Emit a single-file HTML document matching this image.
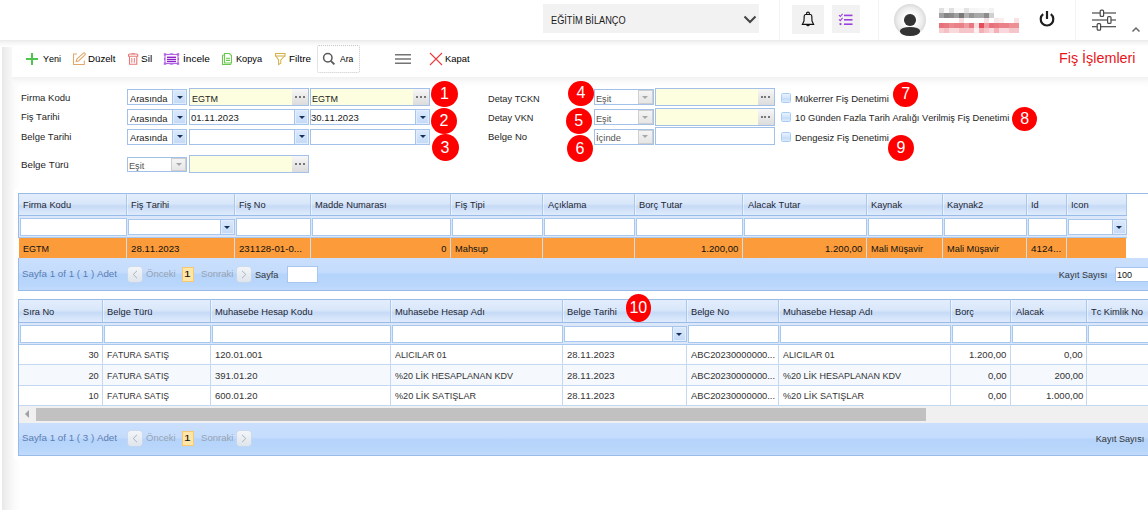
<!DOCTYPE html>
<html><head><meta charset="utf-8"><style>
html,body{margin:0;padding:0;width:1148px;height:510px;overflow:hidden;background:#fff;position:relative;font-family:"Liberation Sans",sans-serif;}
body>div,body>span,body>svg{position:absolute;box-sizing:border-box;}
.t{white-space:nowrap;line-height:20px;font-kerning:none;}
</style></head><body>
<div style="left:2px;top:40px;width:18px;height:470px;background:linear-gradient(90deg,#e8e8e8,#f1f1f1 30%,#f9f9f9 60%,#fff)"></div>
<div style="left:12px;top:47px;width:1136px;height:30px;background:#fff"></div>
<div style="left:14px;top:189px;width:1134px;height:270px;background:#fff"></div>
<div style="left:0px;top:40px;width:1148px;height:7px;background:linear-gradient(#e9e9e9,#f6f6f6 40%,#fff)"></div>
<div style="left:12px;top:77px;width:1136px;height:10px;background:linear-gradient(#f1f1f1,#fafafa 50%,rgba(255,255,255,0))"></div>
<div style="left:543px;top:4.4px;width:216px;height:28.9px;background:#f2f2f2"></div>
<span class="t" style="left:550.85px;top:9.86px;font-size:10.5px;color:#1a1a1a;transform:scale(0.8757,1.0);transform-origin:0 13px;">EĞİTİM BİLANÇO</span>
<svg style="left:743px;top:14px" width="14" height="10" viewBox="0 0 14 10"><polyline points="1.5,2.5 7,8 12.5,2.5" fill="none" stroke="#444" stroke-width="2"/></svg>
<div style="left:779px;top:0px;width:1px;height:40px;background:#f3f3f3"></div>
<div style="left:792px;top:5px;width:32px;height:29px;background:#f2f2f2"></div>
<svg style="left:800px;top:11px" width="16" height="17" viewBox="0 0 16 17"><path d="M6.6 3.4 V2.2 Q6.6 1.1 8 1.1 Q9.4 1.1 9.4 2.2 V3.4" fill="none" stroke="#111" stroke-width="1.1"/><path d="M5.6 3.5 H10.4 Q11.6 3.5 11.8 5 L12 10 L13.6 13.3 H2.4 L4 10 L4.2 5 Q4.4 3.5 5.6 3.5 Z" fill="none" stroke="#111" stroke-width="1.15"/><path d="M6.7 13.5 A1.3 1.3 0 0 0 9.3 13.5" fill="none" stroke="#111" stroke-width="1.1"/></svg>
<div style="left:832px;top:5px;width:28px;height:28px;background:#f2f2f2"></div>
<svg style="left:838px;top:13px" width="16" height="14" viewBox="0 0 16 14"><path d="M1 2.2 L2.3 3.5 L4.6 0.8 M1 6.3 L2.3 7.6 L4.6 4.9" fill="none" stroke="#9b3fe0" stroke-width="1.1"/><circle cx="2.5" cy="11.1" r="1.15" fill="#9b3fe0"/><rect x="6" y="1.6" width="8.5" height="1.6" fill="#9b3fe0"/><rect x="6" y="6" width="8.5" height="1.6" fill="#9b3fe0"/><rect x="6" y="10.4" width="8.5" height="1.6" fill="#9b3fe0"/></svg>
<div style="left:878px;top:0px;width:1px;height:40px;background:#f3f3f3"></div>
<div style="left:894px;top:4px;width:32px;height:32px;border-radius:50%;background:radial-gradient(circle closest-side at 50% 50%,#ffffff 0%,#fbfbfb 45%,#ebebeb 80%,#dadada 100%)"><div style="position:absolute;left:10.2px;top:10px;width:11.6px;height:11.6px;border-radius:50%;background:#333"></div><div style="position:absolute;left:5.8px;top:23.3px;width:20.4px;height:8.4px;border-radius:50% 50% 50% 50% / 45% 45% 55% 55%;background:#333"></div></div>
<div style="left:939px;top:8px;width:5px;height:5px;background:#e0e0e0"></div>
<div style="left:944px;top:8px;width:5px;height:5px;background:#fafafa"></div>
<div style="left:949px;top:8px;width:5px;height:5px;background:#e0e0e0"></div>
<div style="left:954px;top:8px;width:5px;height:5px;background:#fafafa"></div>
<div style="left:959px;top:8px;width:5px;height:5px;background:#fafafa"></div>
<div style="left:964px;top:8px;width:5px;height:5px;background:#e3e3e3"></div>
<div style="left:969px;top:8px;width:5px;height:5px;background:#f5f5f5"></div>
<div style="left:974px;top:8px;width:5px;height:5px;background:#f5f5f5"></div>
<div style="left:979px;top:8px;width:5px;height:5px;background:#f8f8f8"></div>
<div style="left:984px;top:8px;width:5px;height:5px;background:#fafafa"></div>
<div style="left:989px;top:8px;width:5px;height:5px;background:#f2f2f2"></div>
<div style="left:939px;top:13px;width:5px;height:5px;background:#a0a0a0"></div>
<div style="left:944px;top:13px;width:5px;height:5px;background:#858585"></div>
<div style="left:949px;top:13px;width:5px;height:5px;background:#8c8c8c"></div>
<div style="left:954px;top:13px;width:5px;height:5px;background:#a0a0a0"></div>
<div style="left:959px;top:13px;width:5px;height:5px;background:#787878"></div>
<div style="left:964px;top:13px;width:5px;height:5px;background:#b0b0b0"></div>
<div style="left:969px;top:13px;width:5px;height:5px;background:#959595"></div>
<div style="left:974px;top:13px;width:5px;height:5px;background:#a8a8a8"></div>
<div style="left:979px;top:13px;width:5px;height:5px;background:#a8a8a8"></div>
<div style="left:984px;top:13px;width:5px;height:5px;background:#8c8c8c"></div>
<div style="left:989px;top:13px;width:5px;height:5px;background:#d0d0d0"></div>
<div style="left:959px;top:18px;width:5px;height:5px;background:#f8e0e2"></div>
<div style="left:984px;top:18px;width:5px;height:5px;background:#f7e0e2"></div>
<div style="left:994px;top:18px;width:5px;height:5px;background:#f9e8ea"></div>
<div style="left:999px;top:18px;width:5px;height:5px;background:#fbeeee"></div>
<div style="left:1014px;top:18px;width:5px;height:5px;background:#f8e2e4"></div>
<div style="left:939px;top:23px;width:5px;height:5px;background:#e8707a"></div>
<div style="left:944px;top:23px;width:5px;height:5px;background:#e87880"></div>
<div style="left:949px;top:23px;width:5px;height:5px;background:#ec8890"></div>
<div style="left:954px;top:23px;width:5px;height:5px;background:#ec8088"></div>
<div style="left:959px;top:23px;width:5px;height:5px;background:#e88088"></div>
<div style="left:964px;top:23px;width:5px;height:5px;background:#ee9ca2"></div>
<div style="left:969px;top:23px;width:5px;height:5px;background:#e87880"></div>
<div style="left:974px;top:23px;width:5px;height:5px;background:#f8dcdf"></div>
<div style="left:979px;top:23px;width:5px;height:5px;background:#e44a58"></div>
<div style="left:984px;top:23px;width:5px;height:5px;background:#ef9aa0"></div>
<div style="left:989px;top:23px;width:5px;height:5px;background:#e8707c"></div>
<div style="left:994px;top:23px;width:5px;height:5px;background:#e87880"></div>
<div style="left:999px;top:23px;width:5px;height:5px;background:#eb8088"></div>
<div style="left:1004px;top:23px;width:5px;height:5px;background:#eb8088"></div>
<div style="left:1009px;top:23px;width:5px;height:5px;background:#ec9096"></div>
<div style="left:1014px;top:23px;width:5px;height:5px;background:#ec9096"></div>
<div style="left:939px;top:28px;width:5px;height:5px;background:#f7cdd0"></div>
<div style="left:944px;top:28px;width:5px;height:5px;background:#f5c0c5"></div>
<div style="left:949px;top:28px;width:5px;height:5px;background:#f8dadc"></div>
<div style="left:954px;top:28px;width:5px;height:5px;background:#f8dadc"></div>
<div style="left:959px;top:28px;width:5px;height:5px;background:#f5c5ca"></div>
<div style="left:964px;top:28px;width:5px;height:5px;background:#f5c5ca"></div>
<div style="left:969px;top:28px;width:5px;height:5px;background:#f5c5ca"></div>
<div style="left:974px;top:28px;width:5px;height:5px;background:#fdf0f0"></div>
<div style="left:979px;top:28px;width:5px;height:5px;background:#f3b0b5"></div>
<div style="left:984px;top:28px;width:5px;height:5px;background:#f6c5ca"></div>
<div style="left:989px;top:28px;width:5px;height:5px;background:#f8d8dc"></div>
<div style="left:994px;top:28px;width:5px;height:5px;background:#f3b0b5"></div>
<div style="left:999px;top:28px;width:5px;height:5px;background:#f8d8dc"></div>
<div style="left:1004px;top:28px;width:5px;height:5px;background:#f8d8dc"></div>
<div style="left:1009px;top:28px;width:5px;height:5px;background:#f5c5ca"></div>
<div style="left:1014px;top:28px;width:5px;height:5px;background:#f5c5ca"></div>
<svg style="left:1037px;top:9px" width="20" height="20" viewBox="0 0 20 20"><path d="M6.2 5.2 A6.3 6.3 0 1 0 13.8 5.2" fill="none" stroke="#1e1e1e" stroke-width="2.2"/><line x1="10" y1="2" x2="10" y2="10" stroke="#1e1e1e" stroke-width="2.2"/></svg>
<div style="left:1075px;top:0px;width:1px;height:40px;background:#f3f3f3"></div>
<svg style="left:1090px;top:8px" width="28" height="24" viewBox="0 0 28 24"><g stroke="#4a4a4a" stroke-width="1.2" fill="#fff"><line x1="2" y1="5" x2="26" y2="5"/><line x1="2" y1="12" x2="26" y2="12"/><line x1="2" y1="18.7" x2="26" y2="18.7"/><rect x="10.2" y="2.2" width="3.4" height="6.2" rx="1"/><rect x="17.6" y="8.6" width="3.4" height="6.8" rx="1"/><rect x="7.2" y="15.6" width="3.4" height="6.6" rx="1"/></g></svg>
<svg style="left:1131px;top:26px" width="10" height="7" viewBox="0 0 10 7"><polyline points="1.5,5.5 5,2 8.5,5.5" fill="none" stroke="#666" stroke-width="1.5"/></svg>
<div style="left:31.1px;top:53px;width:1.8px;height:12px;background:#4cc64c"></div>
<div style="left:26px;top:58.1px;width:12px;height:1.8px;background:#4cc64c"></div>
<span class="t" style="left:42.80px;top:49.17px;font-size:9.6px;color:#000;transform:scale(0.9425,1.0);transform-origin:0 13px;">Yeni</span>
<svg style="left:72px;top:52px" width="15" height="14" viewBox="0 0 15 14"><path d="M5 2 H1.5 V12.5 H12.3 V8.5" fill="none" stroke="#e3a768" stroke-width="1.05"/><path d="M4.2 9.6 L4.8 7.1 L11.4 1.1 Q12.3 0.5 13 1.3 Q13.6 2.1 13 2.9 L6.6 9.0 Z" fill="none" stroke="#e3a768" stroke-width="1.05"/></svg>
<span class="t" style="left:88.21px;top:49.17px;font-size:9.6px;color:#000;transform:scale(1.0094,1.0);transform-origin:0 13px;">Düzelt</span>
<svg style="left:127px;top:52px" width="13" height="14" viewBox="0 0 13 14"><path d="M1.5 4.3 H10.8 V3.2 Q10.8 2 9.6 2 H2.7 Q1.5 2 1.5 3.2 Z" fill="none" stroke="#e57878" stroke-width="1.1"/><path d="M4.5 2 Q6.1 0.9 7.8 2" fill="none" stroke="#e57878" stroke-width="1"/><path d="M2.5 4.5 V12.2 H9.8 V4.5" fill="none" stroke="#e57878" stroke-width="1.1"/><path d="M4.8 6 V10.8 M7.4 6 V10.8" stroke="#ea8f8f" stroke-width="1.2"/></svg>
<span class="t" style="left:141.15px;top:49.17px;font-size:9.6px;color:#000;transform:scale(1.0427,1.0);transform-origin:0 13px;">Sil</span>
<svg style="left:163px;top:52px" width="17" height="14" viewBox="0 0 17 14"><rect x="2" y="2.5" width="13" height="9" fill="none" stroke="#b565e3" stroke-width="1.1"/><g fill="#b565e3"><rect x="0.8" y="1.2" width="2.4" height="2.4"/><rect x="13.8" y="1.2" width="2.4" height="2.4"/><rect x="0.8" y="10.4" width="2.4" height="2.4"/><rect x="13.8" y="10.4" width="2.4" height="2.4"/><ellipse cx="8.5" cy="2" rx="2.2" ry="0.8"/><ellipse cx="8.5" cy="12" rx="2.2" ry="0.8"/><ellipse cx="1.6" cy="7" rx="0.7" ry="1.6"/><ellipse cx="15.4" cy="7" rx="0.7" ry="1.6"/></g><g fill="#8e22c6"><rect x="4" y="4.6" width="9" height="1.4"/><rect x="4" y="6.8" width="9" height="1.4"/><rect x="4" y="8.9" width="9" height="1.3"/></g></svg>
<span class="t" style="left:182.57px;top:49.17px;font-size:9.6px;color:#000;transform:scale(1.0492,1.0);transform-origin:0 13px;">İncele</span>
<svg style="left:221px;top:52px" width="12" height="14" viewBox="0 0 12 14"><path d="M3.5 1.5 H8.5 L10.5 3.5 V11 H3.5 Z" fill="none" stroke="#68c94e" stroke-width="1.1"/><path d="M3 3 H2.5 Q1.5 3 1.5 4 V12.5 H9 Q10 12.5 10 11.5" fill="none" stroke="#68c94e" stroke-width="1.1"/><path d="M5 6.3 H9 M5 8.4 H9" stroke="#68c94e" stroke-width="1.1"/></svg>
<span class="t" style="left:235.95px;top:49.17px;font-size:9.6px;color:#000;transform:scale(0.9571,1.0);transform-origin:0 13px;">Kopya</span>
<svg style="left:274px;top:52px" width="12" height="14" viewBox="0 0 12 14"><rect x="1.5" y="1.5" width="9.5" height="2.5" fill="none" stroke="#d4b24a" stroke-width="1.05"/><path d="M1.9 4 L4.6 8 V12.6 L6.8 11.2 V8 L10.6 4" fill="none" stroke="#d4b24a" stroke-width="1.05"/></svg>
<span class="t" style="left:288.99px;top:49.17px;font-size:9.6px;color:#000;transform:scale(1.0289,1.0);transform-origin:0 13px;">Filtre</span>
<div style="left:317px;top:45px;width:43px;height:28px;border:1px dotted #c8c8c8;border-radius:2px"></div>
<svg style="left:322px;top:52px" width="14" height="14" viewBox="0 0 14 14"><circle cx="5.8" cy="5.8" r="4.2" fill="none" stroke="#5a5a5a" stroke-width="1.5"/><path d="M8.8 8.8 L12.4 12.4" stroke="#5a5a5a" stroke-width="1.9"/></svg>
<span class="t" style="left:339.78px;top:49.17px;font-size:9.6px;color:#000;transform:scale(0.8847,1.0);transform-origin:0 13px;">Ara</span>
<svg style="left:394px;top:50px" width="18" height="16" viewBox="0 0 18 16"><path d="M1 4.7 H17 M1 9 H17 M1 13.3 H17" stroke="#747474" stroke-width="1.4"/></svg>
<svg style="left:429px;top:52px" width="14" height="14" viewBox="0 0 14 14"><path d="M1 1 L13 13 M13 1 L1 13" stroke="#ee3a3a" stroke-width="1.1"/></svg>
<span class="t" style="left:445.23px;top:49.17px;font-size:9.6px;color:#000;transform:scale(0.9781,1.0);transform-origin:0 13px;">Kapat</span>
<span class="t" style="left:1059.42px;top:48.35px;font-size:14px;color:#e8141c;transform:scale(1.0251,1);transform-origin:0 13px;">Fiş İşlemleri</span>
<span class="t" style="left:21.02px;top:87.97px;font-size:9.6px;color:#1e1e1e;transform:scale(0.9960,1.0);transform-origin:0 13px;">Firma Kodu</span>
<span class="t" style="left:21.03px;top:106.97px;font-size:9.6px;color:#1e1e1e;transform:scale(0.9781,1.0);transform-origin:0 13px;">Fiş Tarihi</span>
<span class="t" style="left:21.03px;top:126.97px;font-size:9.6px;color:#1e1e1e;transform:scale(0.9841,1.0);transform-origin:0 13px;">Belge Tarihi</span>
<span class="t" style="left:21.00px;top:155.17px;font-size:9.6px;color:#1e1e1e;transform:scale(1.0184,1.0);transform-origin:0 13px;">Belge Türü</span>
<div style="left:127px;top:89px;width:60px;height:16px;border:1px solid #a3c0e8;background:#fff"></div>
<div style="left:172px;top:89px;width:15px;height:16px;border:1px solid #a6c4ec;box-shadow:inset 0 0 0 1px #e3eefc;background:linear-gradient(#dce9fb,#d0e2f9 50%,#c3d9f6)"><div style="position:absolute;left:3.5px;top:5.5px;width:0;height:0;border-left:3px solid transparent;border-right:3px solid transparent;border-top:3.5px solid #15305a"></div></div>
<span class="t" style="left:130.18px;top:88.77px;font-size:9.6px;color:#222;transform:scale(0.9731,1.0);transform-origin:0 13px;">Arasında</span>
<div style="left:127px;top:109px;width:60px;height:16px;border:1px solid #a3c0e8;background:#fff"></div>
<div style="left:172px;top:109px;width:15px;height:16px;border:1px solid #a6c4ec;box-shadow:inset 0 0 0 1px #e3eefc;background:linear-gradient(#dce9fb,#d0e2f9 50%,#c3d9f6)"><div style="position:absolute;left:3.5px;top:5.5px;width:0;height:0;border-left:3px solid transparent;border-right:3px solid transparent;border-top:3.5px solid #15305a"></div></div>
<span class="t" style="left:130.18px;top:108.77px;font-size:9.6px;color:#222;transform:scale(0.9731,1.0);transform-origin:0 13px;">Arasında</span>
<div style="left:127px;top:128.5px;width:60px;height:16.5px;border:1px solid #a3c0e8;background:#fff"></div>
<div style="left:172px;top:128.5px;width:15px;height:16.5px;border:1px solid #a6c4ec;box-shadow:inset 0 0 0 1px #e3eefc;background:linear-gradient(#dce9fb,#d0e2f9 50%,#c3d9f6)"><div style="position:absolute;left:3.5px;top:5.8px;width:0;height:0;border-left:3px solid transparent;border-right:3px solid transparent;border-top:3.5px solid #15305a"></div></div>
<span class="t" style="left:130.18px;top:128.27px;font-size:9.6px;color:#222;transform:scale(0.9731,1.0);transform-origin:0 13px;">Arasında</span>
<div style="left:127px;top:156.5px;width:60px;height:15.5px;border:1px solid #a3c0e8;background:#fff"></div>
<div style="left:171px;top:157.5px;width:15px;height:13.5px;border:1px solid #cfcfcf;background:linear-gradient(#f4f4f4,#e6e6e6)"><div style="position:absolute;left:3.5px;top:4.2px;width:0;height:0;border-left:3px solid transparent;border-right:3px solid transparent;border-top:3.5px solid #a8a8a8"></div></div>
<span class="t" style="left:129.45px;top:156.27px;font-size:9.6px;color:#555;transform:scale(0.9529,1.0);transform-origin:0 13px;">Eşit</span>
<div style="left:189px;top:88px;width:120px;height:18px;border:1px solid #a3c0e8;background:#fdfde0"></div>
<div style="left:292px;top:89px;width:16px;height:16px;background:linear-gradient(#f7f7f7,#dcdcdc)"></div>
<div style="left:295px;top:96px;width:2px;height:2px;background:#777"></div>
<div style="left:299px;top:96px;width:2px;height:2px;background:#777"></div>
<div style="left:303px;top:96px;width:2px;height:2px;background:#777"></div>
<div style="left:310px;top:88px;width:120px;height:18px;border:1px solid #a3c0e8;background:#fdfde0"></div>
<div style="left:413px;top:89px;width:16px;height:16px;background:linear-gradient(#f7f7f7,#dcdcdc)"></div>
<div style="left:416px;top:96px;width:2px;height:2px;background:#777"></div>
<div style="left:420px;top:96px;width:2px;height:2px;background:#777"></div>
<div style="left:424px;top:96px;width:2px;height:2px;background:#777"></div>
<span class="t" style="left:191.76px;top:88.77px;font-size:9.6px;color:#1a1a1a;transform:scale(0.9367,1.0);transform-origin:0 13px;">EGTM</span>
<span class="t" style="left:311.76px;top:88.77px;font-size:9.6px;color:#1a1a1a;transform:scale(0.9367,1.0);transform-origin:0 13px;">EGTM</span>
<div style="left:189px;top:109px;width:120px;height:16px;border:1px solid #a3c0e8;background:#fff"></div>
<div style="left:294px;top:109px;width:15px;height:16px;border:1px solid #a6c4ec;box-shadow:inset 0 0 0 1px #e3eefc;background:linear-gradient(#dce9fb,#d0e2f9 50%,#c3d9f6)"><div style="position:absolute;left:3.5px;top:5.5px;width:0;height:0;border-left:3px solid transparent;border-right:3px solid transparent;border-top:3.5px solid #15305a"></div></div>
<div style="left:310px;top:109px;width:120px;height:16px;border:1px solid #a3c0e8;background:#fff"></div>
<div style="left:415px;top:109px;width:15px;height:16px;border:1px solid #a6c4ec;box-shadow:inset 0 0 0 1px #e3eefc;background:linear-gradient(#dce9fb,#d0e2f9 50%,#c3d9f6)"><div style="position:absolute;left:3.5px;top:5.5px;width:0;height:0;border-left:3px solid transparent;border-right:3px solid transparent;border-top:3.5px solid #15305a"></div></div>
<span class="t" style="left:191.43px;top:107.87px;font-size:9.6px;color:#1a1a1a;transform:scale(0.9947,1.0);transform-origin:0 13px;">01.11.2023</span>
<span class="t" style="left:311.44px;top:107.87px;font-size:9.6px;color:#1a1a1a;transform:scale(0.9945,1.0);transform-origin:0 13px;">30.11.2023</span>
<div style="left:189px;top:128.5px;width:120px;height:16.5px;border:1px solid #a3c0e8;background:#fff"></div>
<div style="left:294px;top:128.5px;width:15px;height:16.5px;border:1px solid #a6c4ec;box-shadow:inset 0 0 0 1px #e3eefc;background:linear-gradient(#dce9fb,#d0e2f9 50%,#c3d9f6)"><div style="position:absolute;left:3.5px;top:5.8px;width:0;height:0;border-left:3px solid transparent;border-right:3px solid transparent;border-top:3.5px solid #15305a"></div></div>
<div style="left:310px;top:128.5px;width:120px;height:16.5px;border:1px solid #a3c0e8;background:#fff"></div>
<div style="left:415px;top:128.5px;width:15px;height:16.5px;border:1px solid #a6c4ec;box-shadow:inset 0 0 0 1px #e3eefc;background:linear-gradient(#dce9fb,#d0e2f9 50%,#c3d9f6)"><div style="position:absolute;left:3.5px;top:5.8px;width:0;height:0;border-left:3px solid transparent;border-right:3px solid transparent;border-top:3.5px solid #15305a"></div></div>
<div style="left:189px;top:155px;width:120px;height:18px;border:1px solid #a3c0e8;background:#fdfde0"></div>
<div style="left:292px;top:156px;width:16px;height:16px;background:linear-gradient(#f7f7f7,#dcdcdc)"></div>
<div style="left:295px;top:163px;width:2px;height:2px;background:#777"></div>
<div style="left:299px;top:163px;width:2px;height:2px;background:#777"></div>
<div style="left:303px;top:163px;width:2px;height:2px;background:#777"></div>
<span class="t" style="left:487.64px;top:88.57px;font-size:9.6px;color:#1e1e1e;transform:scale(0.9616,1.0);transform-origin:0 13px;">Detay TCKN</span>
<span class="t" style="left:487.65px;top:107.77px;font-size:9.6px;color:#1e1e1e;transform:scale(0.9583,1.0);transform-origin:0 13px;">Detay VKN</span>
<span class="t" style="left:487.62px;top:127.17px;font-size:9.6px;color:#1e1e1e;transform:scale(0.9921,1.0);transform-origin:0 13px;">Belge No</span>
<div style="left:594px;top:89px;width:59.5px;height:16px;border:1px solid #a3c0e8;background:#fff"></div>
<div style="left:637.5px;top:90px;width:15px;height:14px;border:1px solid #cfcfcf;background:linear-gradient(#f4f4f4,#e6e6e6)"><div style="position:absolute;left:3.5px;top:4.5px;width:0;height:0;border-left:3px solid transparent;border-right:3px solid transparent;border-top:3.5px solid #a8a8a8"></div></div>
<span class="t" style="left:596.45px;top:88.77px;font-size:9.6px;color:#555;transform:scale(0.9529,1.0);transform-origin:0 13px;">Eşit</span>
<div style="left:594px;top:109px;width:59.5px;height:16px;border:1px solid #a3c0e8;background:#fff"></div>
<div style="left:637.5px;top:110px;width:15px;height:14px;border:1px solid #cfcfcf;background:linear-gradient(#f4f4f4,#e6e6e6)"><div style="position:absolute;left:3.5px;top:4.5px;width:0;height:0;border-left:3px solid transparent;border-right:3px solid transparent;border-top:3.5px solid #a8a8a8"></div></div>
<span class="t" style="left:596.45px;top:108.77px;font-size:9.6px;color:#555;transform:scale(0.9529,1.0);transform-origin:0 13px;">Eşit</span>
<div style="left:594px;top:128.5px;width:59.5px;height:16px;border:1px solid #a3c0e8;background:#fff"></div>
<div style="left:637.5px;top:129.5px;width:15px;height:14px;border:1px solid #cfcfcf;background:linear-gradient(#f4f4f4,#e6e6e6)"><div style="position:absolute;left:3.5px;top:4.5px;width:0;height:0;border-left:3px solid transparent;border-right:3px solid transparent;border-top:3.5px solid #a8a8a8"></div></div>
<span class="t" style="left:596.33px;top:128.27px;font-size:9.6px;color:#555;transform:scale(0.9785,1.0);transform-origin:0 13px;">İçinde</span>
<div style="left:655px;top:88px;width:119.5px;height:18px;border:1px solid #a3c0e8;background:#fdfde0"></div>
<div style="left:757.5px;top:89px;width:16px;height:16px;background:linear-gradient(#f7f7f7,#dcdcdc)"></div>
<div style="left:761px;top:96px;width:2px;height:2px;background:#777"></div>
<div style="left:764px;top:96px;width:2px;height:2px;background:#777"></div>
<div style="left:768px;top:96px;width:2px;height:2px;background:#777"></div>
<div style="left:655px;top:108px;width:119.5px;height:18px;border:1px solid #a3c0e8;background:#fdfde0"></div>
<div style="left:757.5px;top:109px;width:16px;height:16px;background:linear-gradient(#f7f7f7,#dcdcdc)"></div>
<div style="left:761px;top:116px;width:2px;height:2px;background:#777"></div>
<div style="left:764px;top:116px;width:2px;height:2px;background:#777"></div>
<div style="left:768px;top:116px;width:2px;height:2px;background:#777"></div>
<div style="left:655px;top:127px;width:119.5px;height:18px;border:1px solid #a3c0e8;background:#fff"></div>
<div style="left:781px;top:92.8px;width:10px;height:10px;border:1px solid #abcdf3;border-radius:1.5px;background:linear-gradient(#e6f1fd,#d4e6fb 45%,#c4dcf8 60%,#dcebfc)"></div>
<div style="left:781px;top:112.3px;width:10px;height:10px;border:1px solid #abcdf3;border-radius:1.5px;background:linear-gradient(#e6f1fd,#d4e6fb 45%,#c4dcf8 60%,#dcebfc)"></div>
<div style="left:781px;top:132px;width:10px;height:10px;border:1px solid #abcdf3;border-radius:1.5px;background:linear-gradient(#e6f1fd,#d4e6fb 45%,#c4dcf8 60%,#dcebfc)"></div>
<span class="t" style="left:794.72px;top:89.17px;font-size:9.6px;color:#1e1e1e;transform:scale(0.9948,1.0);transform-origin:0 13px;">Mükerrer Fiş Denetimi</span>
<span class="t" style="left:794.79px;top:108.17px;font-size:9.6px;color:#1e1e1e;transform:scale(0.9680,1.0);transform-origin:0 13px;">10 Günden Fazla Tarih Aralığı Verilmiş Fiş Denetimi</span>
<span class="t" style="left:794.73px;top:127.97px;font-size:9.6px;color:#1e1e1e;transform:scale(0.9778,1.0);transform-origin:0 13px;">Dengesiz Fiş Denetimi</span>
<div style="left:430.85px;top:80.75px;width:27.5px;height:26.5px;border-radius:50%;background:#ff0000"></div>
<span class="t" style="left:439.93px;top:83.96px;font-size:16px;color:#fff;">1</span>
<div style="left:431.00px;top:108.00px;width:26px;height:26px;border-radius:50%;background:#ff0000"></div>
<span class="t" style="left:439.55px;top:110.96px;font-size:16px;color:#fff;">2</span>
<div style="left:431.50px;top:134.20px;width:27px;height:27px;border-radius:50%;background:#ff0000"></div>
<span class="t" style="left:440.60px;top:137.66px;font-size:16px;color:#fff;">3</span>
<div style="left:568.05px;top:80.65px;width:25.5px;height:25.5px;border-radius:50%;background:#ff0000"></div>
<span class="t" style="left:576.40px;top:83.36px;font-size:16px;color:#fff;">4</span>
<div style="left:565.80px;top:108.00px;width:26px;height:26px;border-radius:50%;background:#ff0000"></div>
<span class="t" style="left:574.37px;top:110.96px;font-size:16px;color:#fff;">5</span>
<div style="left:567.00px;top:135.30px;width:26px;height:27px;border-radius:50%;background:#ff0000"></div>
<span class="t" style="left:575.50px;top:138.76px;font-size:16px;color:#fff;">6</span>
<div style="left:892.85px;top:82.00px;width:25.5px;height:25px;border-radius:50%;background:#ff0000"></div>
<span class="t" style="left:901.14px;top:84.46px;font-size:16px;color:#fff;">7</span>
<div style="left:1011.90px;top:106.75px;width:25.6px;height:24.5px;border-radius:50%;background:#ff0000"></div>
<span class="t" style="left:1020.25px;top:108.96px;font-size:16px;color:#fff;">8</span>
<div style="left:888.00px;top:135.00px;width:26px;height:26px;border-radius:50%;background:#ff0000"></div>
<span class="t" style="left:896.55px;top:137.96px;font-size:16px;color:#fff;">9</span>
<div style="left:19px;top:194px;width:1108px;height:21px;background:linear-gradient(#e3eefc 0%,#d9e7fa 45%,#c6daf6 58%,#d4e4fa 80%,#dfebfc 100%)"></div>
<div style="left:18px;top:193px;width:1130px;height:1px;background:#99bbe8"></div>
<div style="left:18px;top:215px;width:1109px;height:1px;background:#99bbe8"></div>
<div style="left:126px;top:193px;width:1px;height:22px;background:#a9c8ee"></div>
<div style="left:127px;top:194px;width:1px;height:21px;background:rgba(255,255,255,0.45)"></div>
<div style="left:234px;top:193px;width:1px;height:22px;background:#a9c8ee"></div>
<div style="left:235px;top:194px;width:1px;height:21px;background:rgba(255,255,255,0.45)"></div>
<div style="left:310px;top:193px;width:1px;height:22px;background:#a9c8ee"></div>
<div style="left:311px;top:194px;width:1px;height:21px;background:rgba(255,255,255,0.45)"></div>
<div style="left:450px;top:193px;width:1px;height:22px;background:#a9c8ee"></div>
<div style="left:451px;top:194px;width:1px;height:21px;background:rgba(255,255,255,0.45)"></div>
<div style="left:542px;top:193px;width:1px;height:22px;background:#a9c8ee"></div>
<div style="left:543px;top:194px;width:1px;height:21px;background:rgba(255,255,255,0.45)"></div>
<div style="left:634px;top:193px;width:1px;height:22px;background:#a9c8ee"></div>
<div style="left:635px;top:194px;width:1px;height:21px;background:rgba(255,255,255,0.45)"></div>
<div style="left:742px;top:193px;width:1px;height:22px;background:#a9c8ee"></div>
<div style="left:743px;top:194px;width:1px;height:21px;background:rgba(255,255,255,0.45)"></div>
<div style="left:866px;top:193px;width:1px;height:22px;background:#a9c8ee"></div>
<div style="left:867px;top:194px;width:1px;height:21px;background:rgba(255,255,255,0.45)"></div>
<div style="left:942px;top:193px;width:1px;height:22px;background:#a9c8ee"></div>
<div style="left:943px;top:194px;width:1px;height:21px;background:rgba(255,255,255,0.45)"></div>
<div style="left:1026px;top:193px;width:1px;height:22px;background:#a9c8ee"></div>
<div style="left:1027px;top:194px;width:1px;height:21px;background:rgba(255,255,255,0.45)"></div>
<div style="left:1066px;top:193px;width:1px;height:22px;background:#a9c8ee"></div>
<div style="left:1067px;top:194px;width:1px;height:21px;background:rgba(255,255,255,0.45)"></div>
<div style="left:1126px;top:193px;width:1px;height:22px;background:#a9c8ee"></div>
<div style="left:1127px;top:194px;width:1px;height:21px;background:rgba(255,255,255,0.45)"></div>
<div style="left:18px;top:193px;width:1px;height:23px;background:#99bbe8"></div>
<span class="t" style="left:22.94px;top:195.17px;font-size:9.6px;color:#1e2632;transform:scale(0.9711,1.0);transform-origin:0 13px;">Firma Kodu</span>
<span class="t" style="left:130.94px;top:195.17px;font-size:9.6px;color:#1e2632;transform:scale(0.9680,1.0);transform-origin:0 13px;">Fiş Tarihi</span>
<span class="t" style="left:238.95px;top:195.17px;font-size:9.6px;color:#1e2632;transform:scale(0.9564,1.0);transform-origin:0 13px;">Fiş No</span>
<span class="t" style="left:314.93px;top:195.17px;font-size:9.6px;color:#1e2632;transform:scale(0.9733,1.0);transform-origin:0 13px;">Madde Numarası</span>
<span class="t" style="left:454.94px;top:195.17px;font-size:9.6px;color:#1e2632;transform:scale(0.9626,1.0);transform-origin:0 13px;">Fiş Tipi</span>
<span class="t" style="left:547.68px;top:195.17px;font-size:9.6px;color:#1e2632;transform:scale(0.9735,1.0);transform-origin:0 13px;">Açıklama</span>
<span class="t" style="left:638.94px;top:195.17px;font-size:9.6px;color:#1e2632;transform:scale(0.9693,1.0);transform-origin:0 13px;">Borç Tutar</span>
<span class="t" style="left:747.68px;top:195.17px;font-size:9.6px;color:#1e2632;transform:scale(0.9724,1.0);transform-origin:0 13px;">Alacak Tutar</span>
<span class="t" style="left:870.94px;top:195.17px;font-size:9.6px;color:#1e2632;transform:scale(0.9702,1.0);transform-origin:0 13px;">Kaynak</span>
<span class="t" style="left:946.94px;top:195.17px;font-size:9.6px;color:#1e2632;transform:scale(0.9694,1.0);transform-origin:0 13px;">Kaynak2</span>
<span class="t" style="left:1030.85px;top:195.17px;font-size:9.6px;color:#1e2632;transform:scale(0.9587,1.0);transform-origin:0 13px;">Id</span>
<span class="t" style="left:1070.84px;top:195.17px;font-size:9.6px;color:#1e2632;transform:scale(0.9748,1.0);transform-origin:0 13px;">Icon</span>
<div style="left:19px;top:216px;width:1108px;height:21px;background:#dce8f9"></div>
<div style="left:18px;top:237px;width:1109px;height:1px;background:#a9c8ee"></div>
<div style="left:20px;top:218px;width:107px;height:18px;border:1px solid #a9c8ee;background:#fff"></div>
<div style="left:128px;top:219px;width:107px;height:16px;border:1px solid #a9c8ee;background:#fff"></div>
<div style="left:220px;top:219px;width:14.5px;height:16px;border:1px solid #a6c4ec;box-shadow:inset 0 0 0 1px #e3eefc;background:linear-gradient(#dce9fb,#d0e2f9 50%,#c3d9f6)"><div style="position:absolute;left:3.2px;top:5.5px;width:0;height:0;border-left:3px solid transparent;border-right:3px solid transparent;border-top:3.5px solid #15305a"></div></div>
<div style="left:236px;top:218px;width:75px;height:18px;border:1px solid #a9c8ee;background:#fff"></div>
<div style="left:312px;top:218px;width:139px;height:18px;border:1px solid #a9c8ee;background:#fff"></div>
<div style="left:452px;top:218px;width:91px;height:18px;border:1px solid #a9c8ee;background:#fff"></div>
<div style="left:544px;top:218px;width:91px;height:18px;border:1px solid #a9c8ee;background:#fff"></div>
<div style="left:636px;top:218px;width:107px;height:18px;border:1px solid #a9c8ee;background:#fff"></div>
<div style="left:744px;top:218px;width:123px;height:18px;border:1px solid #a9c8ee;background:#fff"></div>
<div style="left:868px;top:218px;width:75px;height:18px;border:1px solid #a9c8ee;background:#fff"></div>
<div style="left:944px;top:218px;width:83px;height:18px;border:1px solid #a9c8ee;background:#fff"></div>
<div style="left:1028px;top:218px;width:39px;height:18px;border:1px solid #a9c8ee;background:#fff"></div>
<div style="left:1068px;top:219px;width:59px;height:16px;border:1px solid #a9c8ee;background:#fff"></div>
<div style="left:1112px;top:219px;width:14.5px;height:16px;border:1px solid #a6c4ec;box-shadow:inset 0 0 0 1px #e3eefc;background:linear-gradient(#dce9fb,#d0e2f9 50%,#c3d9f6)"><div style="position:absolute;left:3.2px;top:5.5px;width:0;height:0;border-left:3px solid transparent;border-right:3px solid transparent;border-top:3.5px solid #15305a"></div></div>
<div style="left:18px;top:216px;width:1px;height:22px;background:#99bbe8"></div>
<div style="left:19px;top:238px;width:1107px;height:20px;background:#fb9b3a"></div>
<div style="left:126px;top:238px;width:1px;height:20px;background:#d4dde8"></div>
<div style="left:234px;top:238px;width:1px;height:20px;background:#d4dde8"></div>
<div style="left:310px;top:238px;width:1px;height:20px;background:#d4dde8"></div>
<div style="left:450px;top:238px;width:1px;height:20px;background:#d4dde8"></div>
<div style="left:542px;top:238px;width:1px;height:20px;background:#d4dde8"></div>
<div style="left:634px;top:238px;width:1px;height:20px;background:#d4dde8"></div>
<div style="left:742px;top:238px;width:1px;height:20px;background:#d4dde8"></div>
<div style="left:866px;top:238px;width:1px;height:20px;background:#d4dde8"></div>
<div style="left:942px;top:238px;width:1px;height:20px;background:#d4dde8"></div>
<div style="left:1026px;top:238px;width:1px;height:20px;background:#d4dde8"></div>
<div style="left:1066px;top:238px;width:1px;height:20px;background:#d4dde8"></div>
<span class="t" style="left:22.96px;top:238.87px;font-size:9.6px;color:#111;transform:scale(0.9367,1.0);transform-origin:0 13px;">EGTM</span>
<span class="t" style="left:131.31px;top:238.87px;font-size:9.6px;color:#111;transform:scale(1.0097,1.0);transform-origin:0 13px;">28.11.2023</span>
<span class="t" style="left:239.41px;top:238.87px;font-size:9.6px;color:#111;transform:scale(1.0068,1.0);transform-origin:0 13px;">231128-01-0...</span>
<span class="t" style="right:701.34px;top:238.87px;font-size:9.6px;color:#111;transform:scale(0.9646,1.0);transform-origin:100% 13px;">0</span>
<span class="t" style="left:454.74px;top:238.87px;font-size:9.6px;color:#111;transform:scale(0.9673,1.0);transform-origin:0 13px;">Mahsup</span>
<span class="t" style="right:409.63px;top:238.87px;font-size:9.6px;color:#111;transform:scale(0.9991,1.0);transform-origin:100% 13px;">1.200,00</span>
<span class="t" style="right:285.33px;top:238.87px;font-size:9.6px;color:#111;transform:scale(0.9991,1.0);transform-origin:100% 13px;">1.200,00</span>
<span class="t" style="left:870.74px;top:238.87px;font-size:9.6px;color:#111;transform:scale(0.9664,1.0);transform-origin:0 13px;">Mali Müşavir</span>
<span class="t" style="left:946.74px;top:238.87px;font-size:9.6px;color:#111;transform:scale(0.9664,1.0);transform-origin:0 13px;">Mali Müşavir</span>
<span class="t" style="left:1031.27px;top:238.87px;font-size:9.6px;color:#111;transform:scale(1.0305,1.0);transform-origin:0 13px;">4124...</span>
<div style="left:18px;top:258px;width:1130px;height:32px;background:linear-gradient(#cadffd 0%,#c5dcfc 44%,#b5d4fb 52%,#b9d6fb 85%,#c1dbfc 100%)"></div>
<div style="left:18px;top:290px;width:1130px;height:1px;background:#99bbe8"></div>
<div style="left:18px;top:258px;width:1px;height:33px;background:#99bbe8"></div>
<span class="t" style="left:22.16px;top:263.87px;font-size:9.6px;color:#5b7db2;transform:scale(1.0175,1.0);transform-origin:0 13px;">Sayfa 1 of 1 ( 1 ) Adet</span>
<div style="left:128.4px;top:267.3px;width:14px;height:14.5px;border-radius:3px;background:linear-gradient(#f3f5f8,#dfe5ec);box-shadow:0 0 0 0.5px #d0d8e2"></div>
<svg style="left:131px;top:270.3px" width="8" height="9" viewBox="0 0 8 9"><polyline points="6,0.8 2.2,4.5 6,8.2" fill="none" stroke="#a8b2be" stroke-width="1"/></svg>
<span class="t" style="left:145.55px;top:263.87px;font-size:9.6px;color:#97a3b2;transform:scale(0.9939,1.0);transform-origin:0 13px;">Önceki</span>
<div style="left:182.2px;top:267.0px;width:11.8px;height:15px;background:#ffe6a6;border:1px solid #f7c772;box-sizing:border-box"></div>
<span class="t" style="left:184.38px;top:264.17px;font-size:9.6px;color:#111;transform:scale(1.2563,1.0);transform-origin:0 13px;">1</span>
<span class="t" style="left:200.56px;top:263.87px;font-size:9.6px;color:#97a3b2;transform:scale(0.9979,1.0);transform-origin:0 13px;">Sonraki</span>
<div style="left:236.5px;top:267.3px;width:14px;height:14.5px;border-radius:3px;background:linear-gradient(#f3f5f8,#dfe5ec);box-shadow:0 0 0 0.5px #d0d8e2"></div>
<svg style="left:240px;top:270.3px" width="8" height="9" viewBox="0 0 8 9"><polyline points="2,0.8 5.8,4.5 2,8.2" fill="none" stroke="#a8b2be" stroke-width="1"/></svg>
<span class="t" style="left:255.18px;top:264.67px;font-size:9.6px;color:#333;transform:scale(0.9539,1.0);transform-origin:0 13px;">Sayfa</span>
<div style="left:287.3px;top:265.5px;width:30.3px;height:17px;border:1px solid #a9c6ee;background:#fff"></div>
<span class="t" style="right:40.34px;top:264.87px;font-size:9.6px;color:#333;transform:scale(0.9451,1.0);transform-origin:100% 13px;">Kayıt Sayısı</span>
<div style="left:1115.4px;top:266.5px;width:40px;height:15.5px;border:1px solid #a9c6ee;background:#fff"></div>
<span class="t" style="left:1117.31px;top:265.47px;font-size:9.6px;color:#111;transform:scale(0.9389,1.0);transform-origin:0 13px;">100</span>
<div style="left:19px;top:300px;width:1130px;height:22px;background:linear-gradient(#e3eefc 0%,#d9e7fa 45%,#c6daf6 58%,#d4e4fa 80%,#dfebfc 100%)"></div>
<div style="left:18px;top:299px;width:1130px;height:1px;background:#99bbe8"></div>
<div style="left:18px;top:322px;width:1131px;height:1px;background:#99bbe8"></div>
<div style="left:102px;top:299px;width:1px;height:23px;background:#a9c8ee"></div>
<div style="left:103px;top:300px;width:1px;height:22px;background:rgba(255,255,255,0.45)"></div>
<div style="left:210px;top:299px;width:1px;height:23px;background:#a9c8ee"></div>
<div style="left:211px;top:300px;width:1px;height:22px;background:rgba(255,255,255,0.45)"></div>
<div style="left:390px;top:299px;width:1px;height:23px;background:#a9c8ee"></div>
<div style="left:391px;top:300px;width:1px;height:22px;background:rgba(255,255,255,0.45)"></div>
<div style="left:562px;top:299px;width:1px;height:23px;background:#a9c8ee"></div>
<div style="left:563px;top:300px;width:1px;height:22px;background:rgba(255,255,255,0.45)"></div>
<div style="left:686px;top:299px;width:1px;height:23px;background:#a9c8ee"></div>
<div style="left:687px;top:300px;width:1px;height:22px;background:rgba(255,255,255,0.45)"></div>
<div style="left:778px;top:299px;width:1px;height:23px;background:#a9c8ee"></div>
<div style="left:779px;top:300px;width:1px;height:22px;background:rgba(255,255,255,0.45)"></div>
<div style="left:950px;top:299px;width:1px;height:23px;background:#a9c8ee"></div>
<div style="left:951px;top:300px;width:1px;height:22px;background:rgba(255,255,255,0.45)"></div>
<div style="left:1010px;top:299px;width:1px;height:23px;background:#a9c8ee"></div>
<div style="left:1011px;top:300px;width:1px;height:22px;background:rgba(255,255,255,0.45)"></div>
<div style="left:1086px;top:299px;width:1px;height:23px;background:#a9c8ee"></div>
<div style="left:1087px;top:300px;width:1px;height:22px;background:rgba(255,255,255,0.45)"></div>
<div style="left:1148px;top:299px;width:1px;height:23px;background:#a9c8ee"></div>
<div style="left:1149px;top:300px;width:1px;height:22px;background:rgba(255,255,255,0.45)"></div>
<div style="left:18px;top:299px;width:1px;height:24px;background:#99bbe8"></div>
<span class="t" style="left:23.28px;top:301.87px;font-size:9.6px;color:#1e2632;transform:scale(0.9596,1.0);transform-origin:0 13px;">Sıra No</span>
<span class="t" style="left:106.94px;top:301.87px;font-size:9.6px;color:#1e2632;transform:scale(0.9701,1.0);transform-origin:0 13px;">Belge Türü</span>
<span class="t" style="left:214.93px;top:301.87px;font-size:9.6px;color:#1e2632;transform:scale(0.9740,1.0);transform-origin:0 13px;">Muhasebe Hesap Kodu</span>
<span class="t" style="left:394.93px;top:301.87px;font-size:9.6px;color:#1e2632;transform:scale(0.9728,1.0);transform-origin:0 13px;">Muhasebe Hesap Adı</span>
<span class="t" style="left:566.93px;top:301.87px;font-size:9.6px;color:#1e2632;transform:scale(0.9716,1.0);transform-origin:0 13px;">Belge Tarihi</span>
<span class="t" style="left:690.94px;top:301.87px;font-size:9.6px;color:#1e2632;transform:scale(0.9645,1.0);transform-origin:0 13px;">Belge No</span>
<span class="t" style="left:782.93px;top:301.87px;font-size:9.6px;color:#1e2632;transform:scale(0.9728,1.0);transform-origin:0 13px;">Muhasebe Hesap Adı</span>
<span class="t" style="left:954.94px;top:301.87px;font-size:9.6px;color:#1e2632;transform:scale(0.9595,1.0);transform-origin:0 13px;">Borç</span>
<span class="t" style="left:1015.68px;top:301.87px;font-size:9.6px;color:#1e2632;transform:scale(0.9683,1.0);transform-origin:0 13px;">Alacak</span>
<span class="t" style="left:1091.49px;top:301.87px;font-size:9.6px;color:#1e2632;transform:scale(0.9658,1.0);transform-origin:0 13px;">Tc Kimlik No</span>
<div style="left:19px;top:323px;width:1142px;height:21px;background:#dce8f9"></div>
<div style="left:18px;top:344px;width:1143px;height:1px;background:#a9c8ee"></div>
<div style="left:20px;top:325px;width:83px;height:18px;border:1px solid #a9c8ee;background:#fff"></div>
<div style="left:104px;top:325px;width:107px;height:18px;border:1px solid #a9c8ee;background:#fff"></div>
<div style="left:212px;top:325px;width:179px;height:18px;border:1px solid #a9c8ee;background:#fff"></div>
<div style="left:392px;top:325px;width:171px;height:18px;border:1px solid #a9c8ee;background:#fff"></div>
<div style="left:564px;top:326px;width:123px;height:16px;border:1px solid #a9c8ee;background:#fff"></div>
<div style="left:672px;top:326px;width:14.5px;height:16px;border:1px solid #a6c4ec;box-shadow:inset 0 0 0 1px #e3eefc;background:linear-gradient(#dce9fb,#d0e2f9 50%,#c3d9f6)"><div style="position:absolute;left:3.2px;top:5.5px;width:0;height:0;border-left:3px solid transparent;border-right:3px solid transparent;border-top:3.5px solid #15305a"></div></div>
<div style="left:688px;top:325px;width:91px;height:18px;border:1px solid #a9c8ee;background:#fff"></div>
<div style="left:780px;top:325px;width:171px;height:18px;border:1px solid #a9c8ee;background:#fff"></div>
<div style="left:952px;top:325px;width:59px;height:18px;border:1px solid #a9c8ee;background:#fff"></div>
<div style="left:1012px;top:325px;width:75px;height:18px;border:1px solid #a9c8ee;background:#fff"></div>
<div style="left:1088px;top:325px;width:73px;height:18px;border:1px solid #a9c8ee;background:#fff"></div>
<div style="left:18px;top:323px;width:1px;height:22px;background:#99bbe8"></div>
<div style="left:19px;top:345px;width:1129px;height:19px;background:#fff"></div>
<div style="left:18px;top:364px;width:1130px;height:1px;background:#c4d8f2"></div>
<div style="left:19px;top:365px;width:1129px;height:20px;background:#f5f8fd"></div>
<div style="left:18px;top:385px;width:1130px;height:1px;background:#c4d8f2"></div>
<div style="left:19px;top:386px;width:1129px;height:19px;background:#fff"></div>
<div style="left:18px;top:405px;width:1130px;height:1px;background:#c4d8f2"></div>
<div style="left:102px;top:345px;width:1px;height:60px;background:#c4d8f2"></div>
<div style="left:210px;top:345px;width:1px;height:60px;background:#c4d8f2"></div>
<div style="left:390px;top:345px;width:1px;height:60px;background:#c4d8f2"></div>
<div style="left:562px;top:345px;width:1px;height:60px;background:#c4d8f2"></div>
<div style="left:686px;top:345px;width:1px;height:60px;background:#c4d8f2"></div>
<div style="left:778px;top:345px;width:1px;height:60px;background:#c4d8f2"></div>
<div style="left:950px;top:345px;width:1px;height:60px;background:#c4d8f2"></div>
<div style="left:1010px;top:345px;width:1px;height:60px;background:#c4d8f2"></div>
<div style="left:1086px;top:345px;width:1px;height:60px;background:#c4d8f2"></div>
<div style="left:18px;top:344px;width:1px;height:62px;background:#99bbe8"></div>
<span class="t" style="right:1049.74px;top:344.97px;font-size:9.6px;color:#333;transform:scale(0.9646,1.0);transform-origin:100% 13px;">30</span>
<span class="t" style="left:106.79px;top:344.97px;font-size:9.6px;color:#333;transform:scale(0.9026,1.0);transform-origin:0 13px;">FATURA SATIŞ</span>
<span class="t" style="left:214.78px;top:344.97px;font-size:9.6px;color:#333;transform:scale(0.9914,1.0);transform-origin:0 13px;">120.01.001</span>
<span class="t" style="left:395.48px;top:344.97px;font-size:9.6px;color:#333;transform:scale(0.9216,1.0);transform-origin:0 13px;">ALICILAR 01</span>
<span class="t" style="left:567.02px;top:344.97px;font-size:9.6px;color:#333;transform:scale(0.9914,1.0);transform-origin:0 13px;">28.11.2023</span>
<span class="t" style="left:691.48px;top:344.97px;font-size:9.6px;color:#333;transform:scale(0.9724,1.0);transform-origin:0 13px;">ABC20230000000...</span>
<span class="t" style="left:783.48px;top:344.97px;font-size:9.6px;color:#333;transform:scale(0.9216,1.0);transform-origin:0 13px;">ALICILAR 01</span>
<span class="t" style="right:141.63px;top:344.97px;font-size:9.6px;color:#333;transform:scale(0.9991,1.0);transform-origin:100% 13px;">1.200,00</span>
<span class="t" style="right:65.03px;top:344.97px;font-size:9.6px;color:#333;transform:scale(0.9991,1.0);transform-origin:100% 13px;">0,00</span>
<span class="t" style="right:1049.74px;top:365.97px;font-size:9.6px;color:#333;transform:scale(0.9646,1.0);transform-origin:100% 13px;">20</span>
<span class="t" style="left:106.79px;top:365.97px;font-size:9.6px;color:#333;transform:scale(0.9026,1.0);transform-origin:0 13px;">FATURA SATIŞ</span>
<span class="t" style="left:215.14px;top:365.97px;font-size:9.6px;color:#333;transform:scale(0.9948,1.0);transform-origin:0 13px;">391.01.20</span>
<span class="t" style="left:395.18px;top:365.97px;font-size:9.6px;color:#333;transform:scale(0.9384,1.0);transform-origin:0 13px;">%20 LİK HESAPLANAN KDV</span>
<span class="t" style="left:567.02px;top:365.97px;font-size:9.6px;color:#333;transform:scale(0.9914,1.0);transform-origin:0 13px;">28.11.2023</span>
<span class="t" style="left:691.48px;top:365.97px;font-size:9.6px;color:#333;transform:scale(0.9724,1.0);transform-origin:0 13px;">ABC20230000000...</span>
<span class="t" style="left:783.18px;top:365.97px;font-size:9.6px;color:#333;transform:scale(0.9384,1.0);transform-origin:0 13px;">%20 LİK HESAPLANAN KDV</span>
<span class="t" style="right:141.63px;top:365.97px;font-size:9.6px;color:#333;transform:scale(0.9991,1.0);transform-origin:100% 13px;">0,00</span>
<span class="t" style="right:65.03px;top:365.97px;font-size:9.6px;color:#333;transform:scale(0.9865,1.0);transform-origin:100% 13px;">200,00</span>
<span class="t" style="right:1049.74px;top:385.97px;font-size:9.6px;color:#333;transform:scale(0.9646,1.0);transform-origin:100% 13px;">10</span>
<span class="t" style="left:106.79px;top:385.97px;font-size:9.6px;color:#333;transform:scale(0.9026,1.0);transform-origin:0 13px;">FATURA SATIŞ</span>
<span class="t" style="left:215.02px;top:385.97px;font-size:9.6px;color:#333;transform:scale(0.9948,1.0);transform-origin:0 13px;">600.01.20</span>
<span class="t" style="left:395.17px;top:385.97px;font-size:9.6px;color:#333;transform:scale(0.9506,1.0);transform-origin:0 13px;">%20 LİK SATIŞLAR</span>
<span class="t" style="left:567.02px;top:385.97px;font-size:9.6px;color:#333;transform:scale(0.9914,1.0);transform-origin:0 13px;">28.11.2023</span>
<span class="t" style="left:691.48px;top:385.97px;font-size:9.6px;color:#333;transform:scale(0.9724,1.0);transform-origin:0 13px;">ABC20230000000...</span>
<span class="t" style="left:783.17px;top:385.97px;font-size:9.6px;color:#333;transform:scale(0.9506,1.0);transform-origin:0 13px;">%20 LİK SATIŞLAR</span>
<span class="t" style="right:141.63px;top:385.97px;font-size:9.6px;color:#333;transform:scale(0.9991,1.0);transform-origin:100% 13px;">0,00</span>
<span class="t" style="right:65.03px;top:385.97px;font-size:9.6px;color:#333;transform:scale(0.9991,1.0);transform-origin:100% 13px;">1.000,00</span>
<div style="left:18px;top:406px;width:1130px;height:17px;background:#f0f0f0"></div>
<div style="left:18px;top:406px;width:1px;height:17px;background:#99bbe8"></div>
<svg style="left:23px;top:409px" width="8" height="10" viewBox="0 0 8 10"><polygon points="6,1 2,5 6,9" fill="#a0a0a0"/></svg>
<div style="left:36px;top:408px;width:890px;height:13px;background:#c1c1c1"></div>
<div style="left:18px;top:423px;width:1130px;height:32px;background:linear-gradient(#cadffd 0%,#c5dcfc 44%,#b5d4fb 52%,#b9d6fb 85%,#c1dbfc 100%)"></div>
<div style="left:18px;top:455px;width:1130px;height:1px;background:#99bbe8"></div>
<div style="left:18px;top:423px;width:1px;height:33px;background:#99bbe8"></div>
<span class="t" style="left:22.16px;top:427.97px;font-size:9.6px;color:#5b7db2;transform:scale(1.0175,1.0);transform-origin:0 13px;">Sayfa 1 of 1 ( 3 ) Adet</span>
<div style="left:128.4px;top:431.40000000000003px;width:14px;height:14.5px;border-radius:3px;background:linear-gradient(#f3f5f8,#dfe5ec);box-shadow:0 0 0 0.5px #d0d8e2"></div>
<svg style="left:131px;top:434.40000000000003px" width="8" height="9" viewBox="0 0 8 9"><polyline points="6,0.8 2.2,4.5 6,8.2" fill="none" stroke="#a8b2be" stroke-width="1"/></svg>
<span class="t" style="left:145.55px;top:427.97px;font-size:9.6px;color:#97a3b2;transform:scale(0.9939,1.0);transform-origin:0 13px;">Önceki</span>
<div style="left:182.2px;top:431.1px;width:11.8px;height:15px;background:#ffe6a6;border:1px solid #f7c772;box-sizing:border-box"></div>
<span class="t" style="left:184.38px;top:428.27px;font-size:9.6px;color:#111;transform:scale(1.2563,1.0);transform-origin:0 13px;">1</span>
<span class="t" style="left:200.56px;top:427.97px;font-size:9.6px;color:#97a3b2;transform:scale(0.9979,1.0);transform-origin:0 13px;">Sonraki</span>
<div style="left:236.5px;top:431.40000000000003px;width:14px;height:14.5px;border-radius:3px;background:linear-gradient(#f3f5f8,#dfe5ec);box-shadow:0 0 0 0.5px #d0d8e2"></div>
<svg style="left:240px;top:434.40000000000003px" width="8" height="9" viewBox="0 0 8 9"><polyline points="2,0.8 5.8,4.5 2,8.2" fill="none" stroke="#a8b2be" stroke-width="1"/></svg>
<span class="t" style="right:3.34px;top:429.37px;font-size:9.6px;color:#333;transform:scale(0.9451,1.0);transform-origin:100% 13px;">Kayıt Sayısı</span>
<div style="left:625.85px;top:294.00px;width:25.5px;height:28px;border-radius:50%;background:#ff0000"></div>
<span class="t" style="left:629.40px;top:297.96px;font-size:16px;color:#fff;">10</span>
</body></html>
